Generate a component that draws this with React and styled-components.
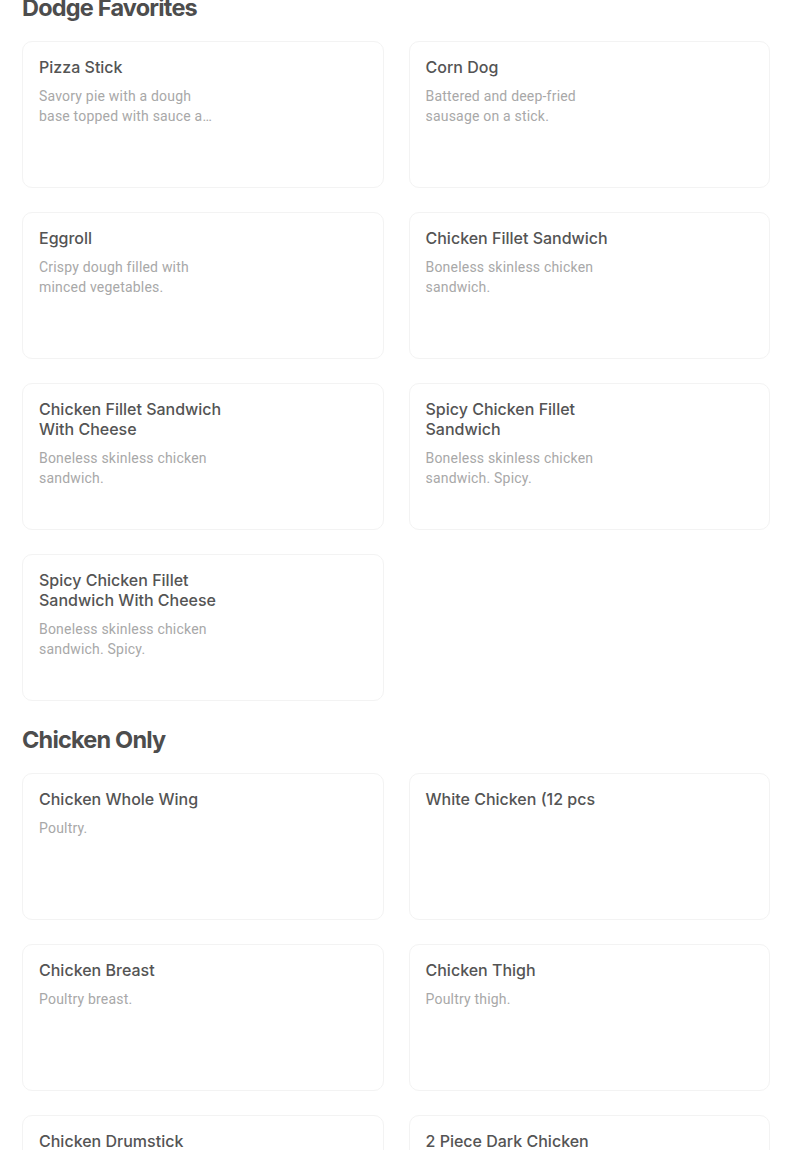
import styled, { createGlobalStyle } from "styled-components"

const GlobalStyle = createGlobalStyle`
    body {
        margin: 0;
        background: #fff;
        font-family: Inter, "Liberation Sans", sans-serif;
    }
`

const sections = [
    {
        title: "Dodge Favorites",
        items: [
            { name: "Pizza Stick", desc: "Savory pie with a dough base topped with sauce and cheese." },
            { name: "Corn Dog", desc: "Battered and deep-fried sausage on a stick." },
            { name: "Eggroll", desc: "Crispy dough filled with minced vegetables." },
            { name: "Chicken Fillet Sandwich", desc: "Boneless skinless chicken sandwich." },
            { name: "Chicken Fillet Sandwich With Cheese", desc: "Boneless skinless chicken sandwich." },
            { name: "Spicy Chicken Fillet Sandwich", desc: "Boneless skinless chicken sandwich. Spicy." },
            { name: "Spicy Chicken Fillet Sandwich With Cheese", desc: "Boneless skinless chicken sandwich. Spicy." },
        ],
    },
    {
        title: "Chicken Only",
        items: [
            { name: "Chicken Whole Wing", desc: "Poultry." },
            { name: "White Chicken (12 pcs" },
            { name: "Chicken Breast", desc: "Poultry breast." },
            { name: "Chicken Thigh", desc: "Poultry thigh." },
            { name: "Chicken Drumstick", desc: "Poultry drumstick." },
            { name: "2 Piece Dark Chicken", desc: "Poultry thigh and drumstick." },
        ],
    },
]

const App = () => {
    return (
        <>
            <GlobalStyle />
            <Page>
                {sections.map((section) => (
                    <Section key={section.title}>
                        <Heading>{section.title}</Heading>
                        <Grid>
                            {section.items.map((item) => (
                                <Card key={item.name}>
                                    <Name>{item.name}</Name>
                                    {item.desc && <Desc>{item.desc}</Desc>}
                                </Card>
                            ))}
                        </Grid>
                    </Section>
                ))}
            </Page>
        </>
    )
}

export default App

const Page = styled.div`
    width: 748px;
    margin-top: -8px;
    padding: 0 34px 40px 22px;
    display: flex;
    flex-direction: column;
    gap: 23px;
`

const Section = styled.section`
    display: flex;
    flex-direction: column;
`

const Heading = styled.h2`
    margin: 0 0 17px;
    font-family: Inter, "Liberation Sans", sans-serif;
    font-size: 23.5px;
    line-height: 32px;
    font-weight: 700;
    letter-spacing: -0.8px;
    color: #4d4d4d;
`

const Grid = styled.div`
    display: grid;
    grid-template-columns: 1fr 1fr;
    gap: 24px 25px;
`

const Card = styled.div`
    height: 147px;
    box-sizing: border-box;
    padding: 15px 16px;
    background: #fff;
    border: 1px solid #f3f3f3;
    border-radius: 10px;
    display: flex;
    flex-direction: column;
    gap: 9px;
`

const Name = styled.div`
    max-width: 200px;
    font-family: Inter, "Liberation Sans", sans-serif;
    font-size: 16px;
    line-height: 20px;
    font-weight: 500;
    color: #545454;
`

const Desc = styled.div`
    max-width: 180px;
    font-family: Roboto, "Liberation Sans", sans-serif;
    font-size: 14px;
    line-height: 20px;
    letter-spacing: 0.2px;
    color: #a8a8a8;
    display: -webkit-box;
    -webkit-line-clamp: 2;
    -webkit-box-orient: vertical;
    overflow: hidden;
`
